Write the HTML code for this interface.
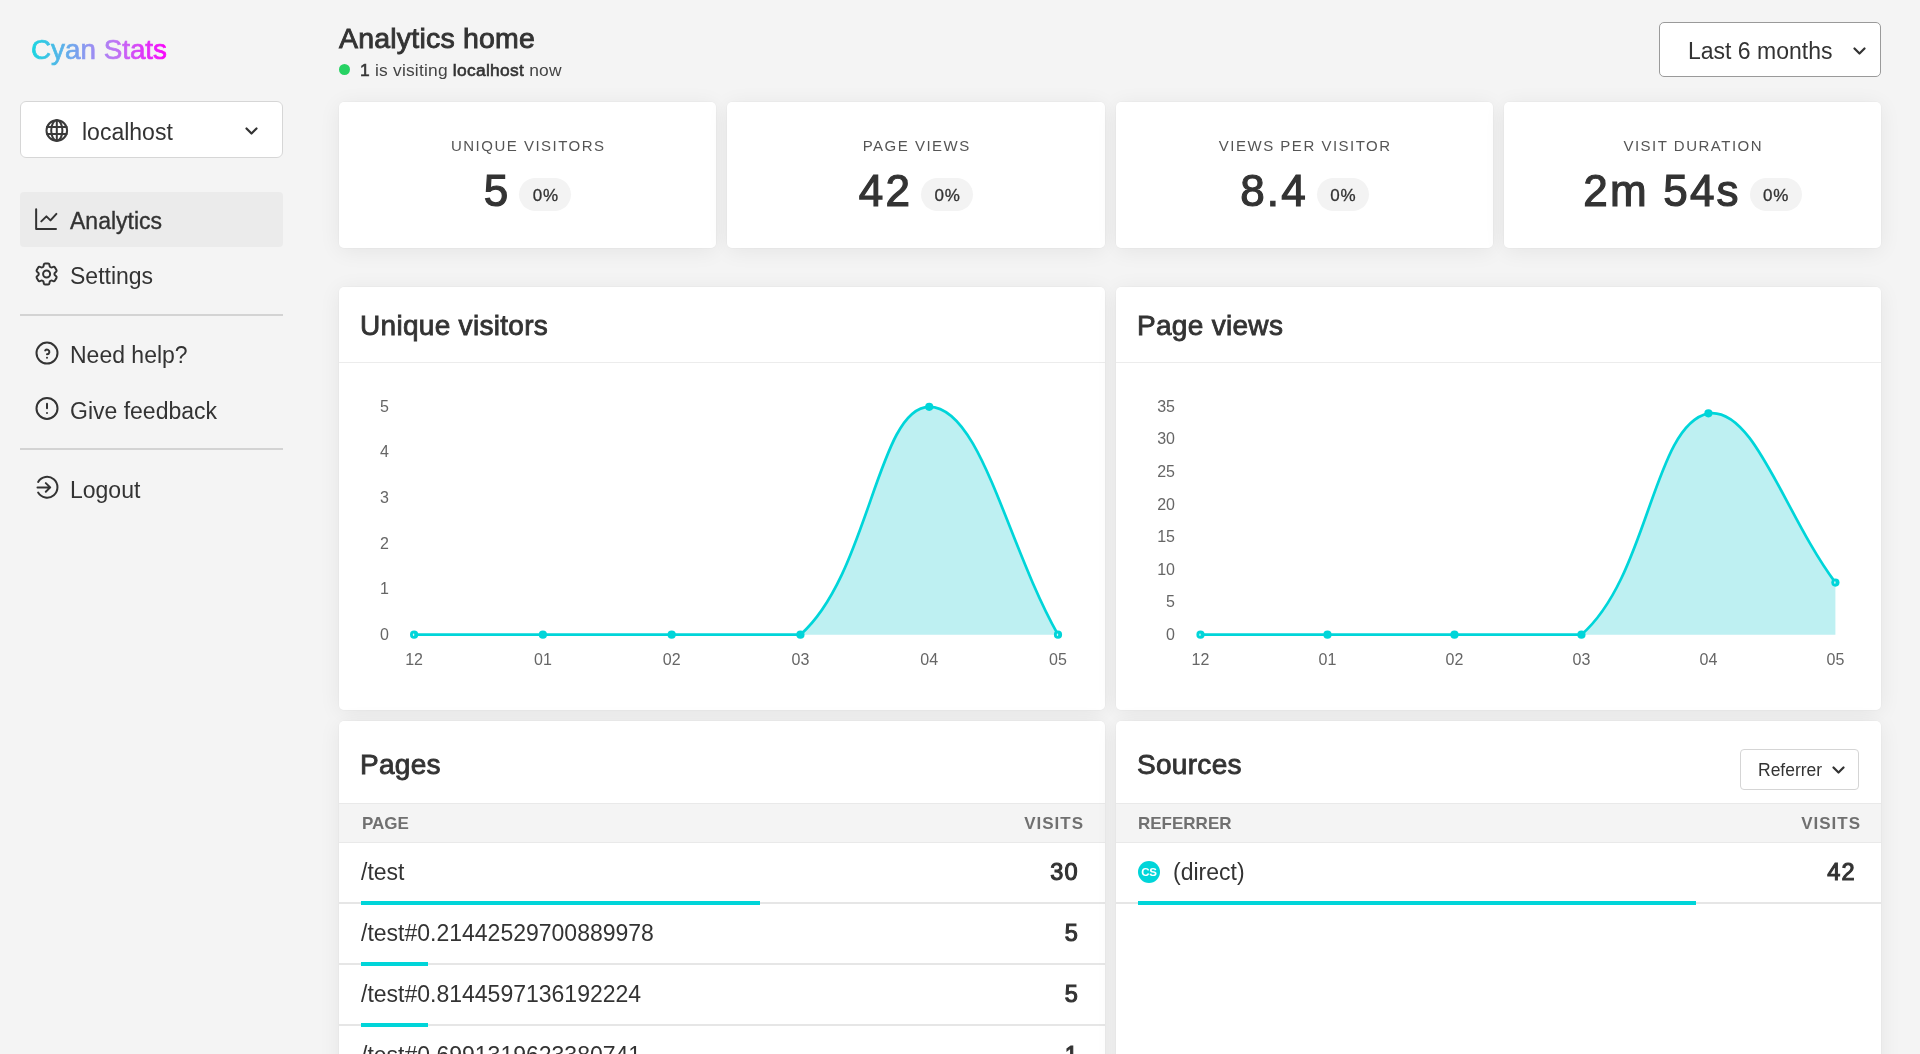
<!DOCTYPE html>
<html><head><meta charset="utf-8">
<style>
*{box-sizing:border-box;margin:0;padding:0}
html,body{width:1920px;height:1054px;overflow:hidden;background:#f4f4f4;font-family:"Liberation Sans",sans-serif;color:#333}
.abs{position:absolute}
.logo{left:30px;top:34px;font-size:28px;line-height:32px;font-weight:400;white-space:nowrap;
 background:linear-gradient(90deg,#1fd6e0 0%,#9b8cf0 45%,#c56cf5 70%,#f505f5 100%);-webkit-background-clip:text;background-clip:text;color:transparent}
.site{left:20px;top:101px;width:263px;height:57px;background:#fff;border:1px solid #d6d6d6;border-radius:6px}
.nav{left:20px;width:263px;height:54px;border-radius:5px}
.nav.active{background:#ebebeb}
.nav.active span{-webkit-text-stroke:0.35px #333;top:16px}
.nav svg{position:absolute;left:15px;top:16px}
.nav span{position:absolute;left:50px;top:15px;font-size:23px;line-height:26px;color:#333}
.hr{left:20px;width:263px;height:2px;background:#d3d3d3}
.card{background:#fff;border-radius:5px;box-shadow:0 0 0 1px rgba(0,0,0,0.02),0 3px 22px rgba(0,0,0,0.065)}
.stat{top:102px;height:146px;width:377px}
.stat .lbl{position:absolute;left:0;right:0;top:36px;text-align:center;font-size:15px;line-height:15px;letter-spacing:1.5px;text-indent:1.5px;color:#555;white-space:nowrap}
.stat .row{position:absolute;left:0;right:0;top:67px;height:44px;display:flex;justify-content:center;align-items:center;gap:9px}
.stat .num{font-size:44px;line-height:44px;color:#333;-webkit-text-stroke:1.2px #333;letter-spacing:2.2px;white-space:nowrap}
.stat .badge{height:33px;padding:0 12.5px 0 13.3px;letter-spacing:0.8px;border-radius:17px;background:#f3f3f3;font-size:17px;line-height:35px;color:#333;margin-top:7px;-webkit-text-stroke:0.3px #333}
.ctitle{position:absolute;left:21px;top:23px;font-size:28px;line-height:32px;color:#333;-webkit-text-stroke:0.85px #333;letter-spacing:0.3px;white-space:nowrap}
.chead{position:absolute;left:0;right:0;top:75px;height:1px;background:#ececec}
.ylab{position:absolute;font-size:16px;line-height:16px;color:#666;text-align:right;width:40px}
.xlab{position:absolute;font-size:16px;line-height:16px;color:#666;text-align:center;width:40px}
</style></head><body><div id="root" style="position:absolute;left:0;top:0;width:1920px;height:1054px;overflow:hidden;will-change:transform">
<svg class="abs" style="left:0;top:0" width="300" height="90" viewBox="0 0 300 90"><defs><linearGradient id="lg" gradientUnits="userSpaceOnUse" x1="31" y1="0" x2="168" y2="0"><stop offset="0" stop-color="#18d6e0"/><stop offset="0.45" stop-color="#9a8ef2"/><stop offset="0.62" stop-color="#be74f4"/><stop offset="1" stop-color="#fb00fb"/></linearGradient></defs><text x="31" y="59.3" font-family="Liberation Sans" font-size="27.5" fill="url(#lg)" stroke="url(#lg)" stroke-width="0.7" textLength="136" lengthAdjust="spacingAndGlyphs">Cyan Stats</text></svg>

<div class="abs site">
 <span class="abs" style="left:61px;top:17px;font-size:23px;line-height:26px;color:#333">localhost</span>
 <svg class="abs" style="left:224px;top:25px" width="13" height="8" viewBox="0 0 13 8" fill="none" stroke="#333" stroke-width="2.2" stroke-linecap="round" stroke-linejoin="round"><path d="M1.5 1.5 L6.5 6.5 L11.5 1.5"/></svg>
</div>

<div class="abs nav active" style="top:192px;height:55px;border-radius:4px">
 <span>Analytics</span>
</div>
<div class="abs nav" style="top:248px">
 <span>Settings</span>
</div>
<div class="abs hr" style="top:314px"></div>
<div class="abs nav" style="top:327px">
 <span>Need help?</span>
</div>
<div class="abs nav" style="top:383px">
 <span>Give feedback</span>
</div>
<div class="abs hr" style="top:448px"></div>
<div class="abs nav" style="top:462px">
 <span>Logout</span>
</div>

<svg class="abs" style="left:0;top:0" width="300" height="520" viewBox="0 0 300 520" fill="none" stroke="#333" stroke-width="2" stroke-linecap="round" stroke-linejoin="round">
 <g stroke="#3a3a3a"><circle cx="56.8" cy="130.5" r="10.3"/><ellipse cx="56.8" cy="130.5" rx="5.6" ry="10.3"/><line x1="56.8" y1="120.3" x2="56.8" y2="140.7"/><line x1="47" y1="127.05" x2="66.6" y2="127.05"/><line x1="47" y1="133.95" x2="66.6" y2="133.95"/></g>
 <path d="M36.15 209.2V229.05H56"/><path d="M41.3 221.4L46.4 216.4L50.5 220.4L56.4 213.9"/>
 <g transform="translate(32.6 260) scale(1.1667)" stroke-width="1.7"><path d="M9.594 3.94c.09-.542.56-.94 1.11-.94h2.593c.55 0 1.02.398 1.11.94l.213 1.281c.063.374.313.686.645.87.074.04.147.083.22.127.325.196.72.257 1.075.124l1.217-.456a1.125 1.125 0 0 1 1.37.49l1.296 2.247a1.125 1.125 0 0 1-.26 1.431l-1.003.827c-.293.241-.438.613-.43.992a7.723 7.723 0 0 1 0 .255c-.008.378.137.75.43.991l1.004.827c.424.35.534.955.26 1.43l-1.298 2.247a1.125 1.125 0 0 1-1.369.491l-1.217-.456c-.355-.133-.75-.072-1.076.124a6.47 6.470 0 0 1-.22.128c-.331.183-.581.495-.644.869l-.213 1.281c-.09.543-.56.94-1.110.94h-2.594c-.55 0-1.019-.398-1.11-.94l-.213-1.281c-.062-.374-.312-.686-.644-.87a6.52 6.52 0 0 1-.22-.127c-.325-.196-.72-.257-1.076-.124l-1.217.456a1.125 1.125 0 0 1-1.369-.49l-1.297-2.247a1.125 1.125 0 0 1 .26-1.431l1.004-.827c.292-.24.437-.613.43-.991a6.932 6.932 0 0 1 0-.255c.007-.38-.138-.751-.43-.992l-1.004-.827a1.125 1.125 0 0 1-.26-1.43l1.297-2.247a1.125 1.125 0 0 1 1.37-.491l1.216.456c.356.133.751.072 1.076-.124.072-.044.146-.086.22-.128.332-.183.582-.495.644-.869l.214-1.28Z"/><circle cx="12" cy="12" r="3"/></g>
 <circle cx="47" cy="353.1" r="10.5"/><path d="M47 357.8v.01"/><path d="M47 354.3a2.33 2.33 0 0 0 1.07-4.41a2.3 2.3 0 0 0-2.82.56"/>
 <circle cx="47" cy="408.4" r="10.5"/><path d="M47 403.7v4.67"/><path d="M47 413v.01"/>
 <path d="M38.13 481.9A10.4 10.4 0 1 1 38.13 492.6"/><path d="M37.5 487.4H50.2M45.8 483.1L50.2 487.4L45.8 491.7"/>
</svg>
<!-- header -->
<div class="abs" style="left:339px;top:22px;font-size:28.5px;line-height:32px;color:#333;-webkit-text-stroke:0.9px #333;letter-spacing:0.2px;white-space:nowrap">Analytics home</div>
<div class="abs" style="left:338.7px;top:64px;width:11.2px;height:11.2px;border-radius:50%;background:#26d263"></div>
<div class="abs" style="left:360px;top:61px;font-size:17.4px;line-height:19px;color:#444;white-space:nowrap;letter-spacing:0.2px"><span style="color:#333;-webkit-text-stroke:0.6px #333;letter-spacing:0.3px">1</span> is visiting <span style="color:#333;-webkit-text-stroke:0.6px #333;letter-spacing:0.3px">localhost</span> now</div>

<div class="abs" style="left:1659px;top:22px;width:222px;height:55px;background:#fff;border:1px solid #9a9a9a;border-radius:5px">
 <span class="abs" style="left:28px;top:15px;font-size:23px;line-height:26px;color:#333;white-space:nowrap">Last 6 months</span>
 <svg class="abs" style="left:193px;top:24px" width="13" height="8" viewBox="0 0 13 8" fill="none" stroke="#333" stroke-width="2.2" stroke-linecap="round" stroke-linejoin="round"><path d="M1.5 1.5 L6.5 6.5 L11.5 1.5"/></svg>
</div>

<!-- stat cards -->
<div id="stats"></div>
<div class="abs card stat" style="left:339px;width:377px"><div class="lbl">UNIQUE VISITORS</div><div class="row"><span class="num">5</span><span class="badge">0%</span></div></div>
<div class="abs card stat" style="left:727px;width:378px"><div class="lbl">PAGE VIEWS</div><div class="row"><span class="num">42</span><span class="badge">0%</span></div></div>
<div class="abs card stat" style="left:1116px;width:377px"><div class="lbl">VIEWS PER VISITOR</div><div class="row"><span class="num">8.4</span><span class="badge">0%</span></div></div>
<div class="abs card stat" style="left:1504px;width:377px"><div class="lbl">VISIT DURATION</div><div class="row"><span class="num">2m 54s</span><span class="badge">0%</span></div></div>


<!-- chart cards -->
<div class="abs card" style="left:339px;top:287px;width:766px;height:423px"><div class="ctitle">Unique visitors</div><div class="chead"></div></div>
<div class="abs ylab" style="left:349px;top:398.8px">5</div><div class="abs ylab" style="left:349px;top:444.4px">4</div><div class="abs ylab" style="left:349px;top:490.0px">3</div><div class="abs ylab" style="left:349px;top:535.5px">2</div><div class="abs ylab" style="left:349px;top:581.1px">1</div><div class="abs ylab" style="left:349px;top:626.7px">0</div>
<div class="abs xlab" style="left:394.1px;top:651.7px">12</div><div class="abs xlab" style="left:522.9px;top:651.7px">01</div><div class="abs xlab" style="left:651.7px;top:651.7px">02</div><div class="abs xlab" style="left:780.4px;top:651.7px">03</div><div class="abs xlab" style="left:909.2px;top:651.7px">04</div><div class="abs xlab" style="left:1038.0px;top:651.7px">05</div>
<svg class="abs" style="left:339px;top:287px" width="766" height="423" viewBox="339 287 766 423"><path d="M414.10 634.70 C465.61 634.70 491.37 634.70 542.88 634.70 C594.39 634.70 620.15 634.70 671.66 634.70 C723.17 634.70 766.47 634.70 800.44 634.70 C869.49 573.60 877.71 406.80 929.22 406.80 C980.73 406.80 1006.49 543.54 1058.00 634.70 L1058.00 634.70 L414.10 634.70 Z" fill="#bef0f2" stroke="none"/><path d="M414.10 634.70 C465.61 634.70 491.37 634.70 542.88 634.70 C594.39 634.70 620.15 634.70 671.66 634.70 C723.17 634.70 766.47 634.70 800.44 634.70 C869.49 573.60 877.71 406.80 929.22 406.80 C980.73 406.80 1006.49 543.54 1058.00 634.70" fill="none" stroke="#00d5d9" stroke-width="2.7" stroke-linejoin="round"/><circle cx="414.10" cy="634.70" r="4.1" fill="#00d5d9"/><ellipse cx="413.60" cy="634.70" rx="0.7" ry="1.3" fill="#d8f8f8"/><circle cx="542.88" cy="634.70" r="4.1" fill="#00d5d9"/><circle cx="671.66" cy="634.70" r="4.1" fill="#00d5d9"/><circle cx="800.44" cy="634.70" r="4.1" fill="#00d5d9"/><circle cx="929.22" cy="406.80" r="4.1" fill="#00d5d9"/><circle cx="1058.00" cy="634.70" r="4.1" fill="#00d5d9"/><ellipse cx="1057.50" cy="634.70" rx="0.7" ry="1.3" fill="#d8f8f8"/></svg>
<div class="abs card" style="left:1116px;top:287px;width:765px;height:423px"><div class="ctitle">Page views</div><div class="chead"></div></div>
<div class="abs ylab" style="left:1135px;top:398.8px">35</div><div class="abs ylab" style="left:1135px;top:431.4px">30</div><div class="abs ylab" style="left:1135px;top:463.9px">25</div><div class="abs ylab" style="left:1135px;top:496.5px">20</div><div class="abs ylab" style="left:1135px;top:529.0px">15</div><div class="abs ylab" style="left:1135px;top:561.6px">10</div><div class="abs ylab" style="left:1135px;top:594.1px">5</div><div class="abs ylab" style="left:1135px;top:626.7px">0</div>
<div class="abs xlab" style="left:1180.5px;top:651.7px">12</div><div class="abs xlab" style="left:1307.5px;top:651.7px">01</div><div class="abs xlab" style="left:1434.5px;top:651.7px">02</div><div class="abs xlab" style="left:1561.4px;top:651.7px">03</div><div class="abs xlab" style="left:1688.4px;top:651.7px">04</div><div class="abs xlab" style="left:1815.4px;top:651.7px">05</div>
<svg class="abs" style="left:1116px;top:287px" width="765" height="423" viewBox="1116 287 765 423"><path d="M1200.50 634.70 C1251.29 634.70 1276.69 634.70 1327.48 634.70 C1378.27 634.70 1403.67 634.70 1454.46 634.70 C1505.25 634.70 1547.69 634.70 1581.44 634.70 C1649.27 575.57 1652.89 424.70 1708.42 413.31 C1754.47 406.80 1784.61 514.89 1835.40 582.61 L1835.40 634.70 L1200.50 634.70 Z" fill="#bef0f2" stroke="none"/><path d="M1200.50 634.70 C1251.29 634.70 1276.69 634.70 1327.48 634.70 C1378.27 634.70 1403.67 634.70 1454.46 634.70 C1505.25 634.70 1547.69 634.70 1581.44 634.70 C1649.27 575.57 1652.89 424.70 1708.42 413.31 C1754.47 406.80 1784.61 514.89 1835.40 582.61" fill="none" stroke="#00d5d9" stroke-width="2.7" stroke-linejoin="round"/><circle cx="1200.50" cy="634.70" r="4.1" fill="#00d5d9"/><ellipse cx="1200.00" cy="634.70" rx="0.7" ry="1.3" fill="#d8f8f8"/><circle cx="1327.48" cy="634.70" r="4.1" fill="#00d5d9"/><circle cx="1454.46" cy="634.70" r="4.1" fill="#00d5d9"/><circle cx="1581.44" cy="634.70" r="4.1" fill="#00d5d9"/><circle cx="1708.42" cy="413.31" r="4.1" fill="#00d5d9"/><circle cx="1835.40" cy="582.61" r="4.1" fill="#00d5d9"/><ellipse cx="1834.90" cy="582.61" rx="0.7" ry="1.3" fill="#d8f8f8"/></svg>
<!-- table cards -->
<style>
.ttitle{position:absolute;left:21px;top:28px;font-size:28px;line-height:32px;color:#333;-webkit-text-stroke:0.85px #333;letter-spacing:0.3px;white-space:nowrap}
.tline{position:absolute;left:0;right:0;height:1px;background:#e9e9e9}
.thead{position:absolute;left:0;right:0;top:83px;height:38px;background:#f4f4f4}
.th{position:absolute;top:12px;font-size:17px;line-height:16px;font-weight:700;color:#707070;letter-spacing:0px;white-space:nowrap}
.trow{position:absolute;left:0;right:0;height:61px}
.trow .bd{position:absolute;left:0;right:0;top:59px;height:2px;background:#e6e6e6}
.trow .bar{position:absolute;left:22px;top:58px;height:4px;background:#00d5d9}
.trow .nm{position:absolute;left:22px;top:18px;font-size:23px;line-height:23px;color:#333;white-space:nowrap}
.trow .vl{position:absolute;right:26px;top:18px;font-size:23.5px;line-height:23px;color:#333;-webkit-text-stroke:1.1px #333;white-space:nowrap;letter-spacing:1.3px}
</style>
<div class="abs card" style="left:339px;top:721px;width:766px;height:400px;overflow:hidden">
 <div class="ttitle">Pages</div>
 <div class="tline" style="top:82px"></div>
 <div class="thead"><span class="th" style="left:23px">PAGE</span><span class="th" style="right:21px;letter-spacing:1px">VISITS</span></div>
 <div class="tline" style="top:121px"></div>
 <div class="trow" style="top:122px"><span class="nm">/test</span><span class="vl">30</span><div class="bd"></div><div class="bar" style="width:399px"></div></div>
 <div class="trow" style="top:183px"><span class="nm">/test#0.21442529700889978</span><span class="vl">5</span><div class="bd"></div><div class="bar" style="width:66.5px"></div></div>
 <div class="trow" style="top:244px"><span class="nm">/test#0.8144597136192224</span><span class="vl">5</span><div class="bd"></div><div class="bar" style="width:66.5px"></div></div>
 <div class="trow" style="top:305px"><span class="nm">/test#0.6991319623380741</span><span class="vl">1</span><div class="bd"></div><div class="bar" style="width:13.3px"></div></div>
</div>
<div class="abs card" style="left:1116px;top:721px;width:765px;height:400px;overflow:hidden">
 <div class="ttitle">Sources</div>
 <div class="abs" style="left:624px;top:28px;width:119px;height:41px;border:1px solid #d5d5d5;border-radius:4px;background:#fff">
  <span class="abs" style="left:17px;top:11px;font-size:17.5px;line-height:18px;color:#333;white-space:nowrap">Referrer</span>
  <svg class="abs" style="left:91px;top:16px" width="13" height="8" viewBox="0 0 13 8" fill="none" stroke="#333" stroke-width="2.2" stroke-linecap="round" stroke-linejoin="round"><path d="M1.5 1.5 L6.5 6.5 L11.5 1.5"/></svg>
 </div>
 <div class="tline" style="top:82px"></div>
 <div class="thead"><span class="th" style="left:22px">REFERRER</span><span class="th" style="right:20px;letter-spacing:1px">VISITS</span></div>
 <div class="tline" style="top:121px"></div>
 <div class="trow" style="top:122px">
  <div class="abs" style="left:22px;top:18px;width:22px;height:22px;border-radius:50%;background:#00d5d9;color:#fff;font-size:11.5px;line-height:23px;text-align:center;font-weight:700;letter-spacing:-0.3px">CS</div>
  <span class="nm" style="left:57px">(direct)</span><span class="vl" style="right:25px">42</span><div class="bd"></div><div class="bar" style="width:558px"></div></div>
</div>
</div></body></html>
